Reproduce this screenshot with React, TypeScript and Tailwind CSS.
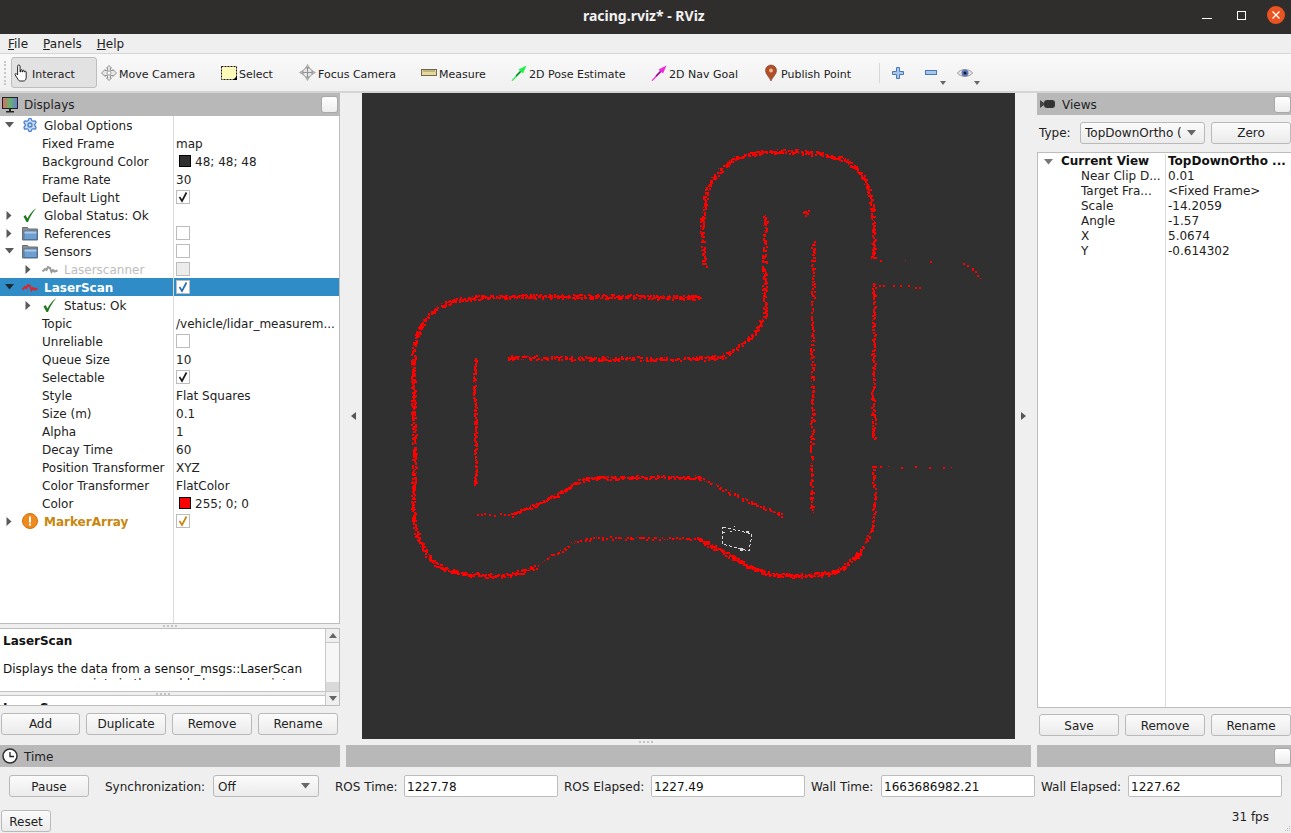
import { Settings } from 'lucide-react';
import type { ReactNode } from 'react';

// ---- laser scan points, screen coordinates ----
type Pt = [number, number];
type Wall = { pts: Pt[]; step: number; jitter: number };

const WALLS: Wall[] = [
  { step: 0.8, jitter: 2, pts: [[704, 265], [702, 240], [702, 220], [706, 193], [714, 177], [729, 162], [744, 155], [775, 151], [806, 152], [840, 158], [859, 172], [869, 193], [873, 223], [873, 258]] },
  { step: 0.9, jitter: 2, pts: [[765, 216], [764, 257], [764, 290], [764, 313], [756, 330], [746, 340], [733, 350], [714, 357], [668, 358], [591, 358], [509, 357]] },
  { step: 0.7, jitter: 2, pts: [[698, 297], [591, 296], [515, 296], [469, 298], [446, 303], [429, 315], [417, 333], [413, 357], [413, 407], [414, 457], [413, 490], [414, 523], [423, 548], [438, 565], [465, 573], [503, 575], [534, 567]] },
  { step: 2.6, jitter: 1.4, pts: [[534, 567], [561, 550], [584, 539], [630, 538], [668, 538], [698, 538]] },
  { step: 0.6, jitter: 2, pts: [[698, 538], [725, 553], [764, 572], [802, 575], [836, 570], [859, 553]] },
  { step: 1.5, jitter: 1.4, pts: [[859, 553], [871, 530], [874, 503], [873, 473], [874, 466]] },
  { step: 1, jitter: 1.4, pts: [[475, 358], [474, 390], [475, 430], [475, 483]] },
  { step: 4, jitter: 0.8, pts: [[478, 514], [511, 514]] },
  { step: 0.8, jitter: 1.6, pts: [[511, 514], [534, 505], [561, 492], [584, 479], [630, 477], [698, 477]] },
  { step: 2, jitter: 1.5, pts: [[698, 477], [725, 490], [752, 503], [781, 515]] },
  { step: 1.4, jitter: 1.8, pts: [[813, 242], [812, 330], [812, 420], [811, 510]] },
  { step: 1.1, jitter: 1.7, pts: [[874, 283], [873, 360], [873, 437]] },
  { step: 0.5, jitter: 2.5, pts: [[804, 212], [808, 213]] },
  { step: 7, jitter: 0.8, pts: [[878, 285], [900, 285], [920, 287]] },
  { step: 22, jitter: 0.6, pts: [[880, 260], [930, 260]] },
  { step: 5, jitter: 0.8, pts: [[964, 263], [972, 268], [980, 278]] },
  { step: 11, jitter: 0.6, pts: [[880, 466], [951, 467]] },
];

let seed = 4211;
const rnd = () => {
  seed = (seed * 1103515245 + 12345) & 0x7fffffff;
  return seed / 0x7fffffff;
};

const catmull = (a: Pt, b: Pt, c: Pt, d: Pt, t: number): Pt => {
  const f = (p0: number, p1: number, p2: number, p3: number) =>
    0.5 * (2 * p1 + (p2 - p0) * t + (2 * p0 - 5 * p1 + 4 * p2 - p3) * t * t + (3 * p1 - p0 - 3 * p2 + p3) * t * t * t);
  return [f(a[0], b[0], c[0], d[0]), f(a[1], b[1], c[1], d[1])];
};

const buildScan = () => {
  let out = '';
  for (const w of WALLS) {
    const p = w.pts;
    for (let i = 0; i < p.length - 1; i++) {
      const a = p[Math.max(i - 1, 0)];
      const b = p[i];
      const c = p[i + 1];
      const d = p[Math.min(i + 2, p.length - 1)];
      const len = Math.hypot(c[0] - b[0], c[1] - b[1]);
      const n = Math.max(1, Math.round(len / w.step));
      for (let k = 0; k <= n; k++) {
        const [x, y] = catmull(a, b, c, d, k / n);
        const px = Math.round(x + (rnd() - 0.5) * 2 * w.jitter);
        const py = Math.round(y + (rnd() - 0.5) * 2 * w.jitter);
        const s = rnd() > 0.8 ? 1 : 2;
        out += `M${px} ${py}h${s}v${s}h-${s}z`;
      }
    }
  }
  return out;
};

const SCAN_PATH = buildScan();

// ---- small drawings ----
const TriDown = ({ color = '#5a5a5a' }: { color?: string }) => (
  <svg width="9" height="6" viewBox="0 0 9 6"><path d="M0 0h9L4.500 5.500z" fill={color} /></svg>
);
const TriRight = ({ color = '#5a5a5a' }: { color?: string }) => (
  <svg width="6" height="9" viewBox="0 0 6 9"><path d="M0.500 0v9L5.500 4.500z" fill={color} /></svg>
);
const TriSmall = () => (
  <svg width="6" height="4" viewBox="0 0 6 4"><path d="M0 0h6L3 4z" fill="#666" /></svg>
);

const CheckMark = ({ color = '#1d1d1d' }: { color?: string }) => (
  <svg width="12" height="12" viewBox="0 0 12 12">
    <path d="M2.500 6l2.500 4L9.500 1.500" fill="none" stroke={color} strokeWidth="1.700" />
  </svg>
);

const Checkbox = ({ checked, color, disabled }: { checked?: boolean; color?: string; disabled?: boolean }) => (
  <span className={`flex h-[14px] w-[14px] items-center justify-center border border-[#bcbcbc] ${disabled ? 'bg-[#ececec]' : 'bg-white'}`}>
    {checked && <CheckMark color={color} />}
  </span>
);

const GreenCheck = () => (
  <svg width="16" height="16" viewBox="0 0 16 16">
    <path d="M1.500 9.500l2-1.500 2 3.500C7.500 7.500 10 4 14.500 1 11 5 8 9.500 6 15h-1.500z" fill="#1f7a1f" />
  </svg>
);

const FolderIcon = () => (
  <svg width="16" height="16" viewBox="0 0 16 16">
    <path d="M.5 2.500h5l1 1.500h9v11H.5z" fill="#8d8d8d" stroke="#6d6d6d" />
    <rect x="2" y="6" width="13" height="8.500" fill="#6f9fd0" stroke="#3f6d9e" strokeWidth="0.800" />
    <rect x="2.500" y="6.500" width="12" height="2" fill="#a9c9ea" />
  </svg>
);

const WaveIcon = ({ color }: { color: string }) => (
  <svg width="16" height="10" viewBox="0 0 16 10">
    <path d="M0.500 7.500L3 5l1.500 1 1.500-3 2 1 1.500 4 1.500-2 1.500 1.500 3-1" fill="none" stroke={color} strokeWidth="2" />
  </svg>
);

const WarnIcon = () => (
  <svg width="16" height="16" viewBox="0 0 16 16">
    <circle cx="8" cy="8" r="7.500" fill="#ef8a1d" stroke="#d0700f" />
    <rect x="7" y="3.500" width="2" height="6" fill="#fff" />
    <rect x="7" y="10.500" width="2" height="2" fill="#fff" />
  </svg>
);

const MonitorIcon = () => (
  <svg width="16" height="16" viewBox="0 0 16 16">
    <defs>
      <linearGradient id="mon" x1="0" x2="1" y1="0" y2="0">
        <stop offset="0" stopColor="#e2666a" />
        <stop offset="0.5" stopColor="#62b56a" />
        <stop offset="1" stopColor="#6c78d8" />
      </linearGradient>
    </defs>
    <rect x="0.500" y="0.500" width="15" height="11" fill="url(#mon)" stroke="#222" />
    <rect x="7" y="12" width="2" height="2" fill="#222" />
    <rect x="4" y="14" width="8" height="1.500" fill="#222" />
  </svg>
);

const ClockIcon = () => (
  <svg width="16" height="16" viewBox="0 0 16 16">
    <circle cx="8" cy="8" r="7" fill="#fff" stroke="#2d2d2d" strokeWidth="1.500" />
    <path d="M8 4v4.500h4" fill="none" stroke="#222" strokeWidth="1.300" />
  </svg>
);

const CameraIcon = () => (
  <svg width="16" height="10" viewBox="0 0 16 10">
    <rect x="4" y="1" width="11" height="8" rx="3" fill="#333" />
    <path d="M0 1v8l4-3V4z" fill="#444" />
  </svg>
);

const HandIcon = () => (
  <svg width="16" height="18" viewBox="0 0 16 18">
    <path
      d="M4.800 1c.8 0 1.300.6 1.300 1.400V8h.5V6.600c0-1.200 1.600-1.200 1.600 0V8h.4V7c0-1.100 1.600-1.100 1.600 0v1h.4c0-1 1.600-1 1.600 0v5c0 2.500-1 4-3 4H6.200c-1.200 0-1.500-.5-2.100-1.500L1.200 11c-.5-1 .6-1.800 1.400-1.100l1 1V2.400C3.600 1.600 4.100 1 4.800 1z"
      fill="#fff"
      stroke="#111"
      strokeWidth="0.900"
    />
  </svg>
);

const MoveIcon = () => (
  <svg width="16" height="16" viewBox="0 0 16 16">
    <path d="M8 .5L10.500 3H9.500v2.500H12V4.500L15.500 8 12 11.500v-1H9.500V13h1L8 15.500 5.500 13h1v-2.500H4v1L.5 8 4 4.500v1h2.500V3h-1z" fill="#e6e6e6" stroke="#7b7b7b" strokeWidth="0.800" />
    <circle cx="8" cy="8" r="2" fill="#fff" stroke="#8b8b8b" strokeWidth="0.800" />
  </svg>
);

const SelectIcon = () => (
  <svg width="16" height="14" viewBox="0 0 16 14">
    <rect x="0.500" y="0.500" width="15" height="13" fill="#fdf9b9" stroke="#111" strokeDasharray="2 1" />
    <path d="M12 14l4-4v4z" fill="#000" />
  </svg>
);

const FocusIcon = () => (
  <svg width="17" height="17" viewBox="0 0 18 18">
    <path d="M9 .5l2 3.500H7zM9 17.500l2-3.500H7zM.5 9L4 7v4zM17.500 9L14 7v4z" fill="#bdbdbd" stroke="#8d8d8d" strokeWidth="0.600" />
    <circle cx="9" cy="9" r="5" fill="#e6e6e6" stroke="#8d8d8d" />
    <path d="M9 4v10M4 9h10" stroke="#8d8d8d" />
  </svg>
);

const RulerIcon = () => (
  <svg width="16" height="7" viewBox="0 0 16 7">
    <rect x="0.500" y="0.500" width="15" height="6" fill="#e8d99a" stroke="#6e6a52" />
    <path d="M3 1v2M5 1v2M7 1v2M9 1v2M11 1v2M13 1v2" stroke="#6e6a52" strokeWidth="0.700" />
  </svg>
);

const ArrowIcon = ({ fill, dark }: { fill: string; dark: string }) => (
  <svg width="16" height="16" viewBox="0 0 16 16">
    <path d="M0.500 15.500L9 6 7.500 4.500 15.500 .5 12 8.500 10.500 7 1.500 16z" fill={fill} />
    <path d="M5 11l4.500-4.500" stroke={dark} strokeWidth="1.200" />
  </svg>
);

const PinIcon = () => (
  <svg width="12" height="18" viewBox="0 0 12 16" className="mr-[2px]">
    <path d="M6 16C4.500 12 .5 9.500.5 5.500a5.500 5.500 0 0 1 11 0C11.500 9.500 7.500 12 6 16z" fill="#b0502a" stroke="#7a3a1e" strokeWidth="0.600" />
    <circle cx="6" cy="5.500" r="2" fill="#f0b48e" />
  </svg>
);

const PlusIcon = () => (
  <svg width="12" height="12" viewBox="0 0 12 12">
    <path d="M4.500.5h3v4h4v3h-4v4h-3v-4h-4v-3h4z" fill="#a8c6ea" stroke="#4a78b4" />
  </svg>
);

const MinusIcon = () => (
  <svg width="12" height="5" viewBox="0 0 12 5">
    <rect x="0.500" y="0.500" width="11" height="4" fill="#a8c6ea" stroke="#4a78b4" />
  </svg>
);

const EyeIcon = () => (
  <svg width="16" height="12" viewBox="0 0 16 12">
    <path d="M.5 6C3 1.500 13 1.500 15.500 6 13 10.500 3 10.500.5 6z" fill="#e4e4e4" stroke="#9a9a9a" />
    <circle cx="8" cy="6" r="3.500" fill="#5f76b5" />
    <circle cx="8" cy="6" r="1.500" fill="#111a3a" />
  </svg>
);

// ---- chrome ----
const FloatButton = () => (
  <span className="h-[17px] w-[17px] shrink-0 rounded-[3px] border border-[#a9a9a9] bg-gradient-to-b from-white to-[#ededed]" />
);

const DockTitle = ({ icon, title }: { icon: ReactNode; title: string }) => (
  <div className="flex h-[23px] shrink-0 items-center bg-[#b8b8b8] pl-[2px] pr-[2px] text-[#222]">
    <span className="flex w-[16px] items-center justify-center">{icon}</span>
    <span className="ml-[6px] mt-[2px] flex-1">{title}</span>
    <FloatButton />
  </div>
);

const Button = ({ label, className, labelClass }: { label: string; className: string; labelClass?: string }) => (
  <div className={`flex h-[22px] items-center justify-center rounded-[3px] border border-[#b9b9b9] bg-gradient-to-b from-[#fbfbfb] to-[#ebebeb] pt-[1px] text-[#222] ${className}`}>
    <span className={labelClass}>{label}</span>
  </div>
);

const Combo = ({ label, className, labelClass }: { label: string; className: string; labelClass?: string }) => (
  <div className={`flex h-[22px] items-center rounded-[3px] border border-[#b9b9b9] bg-gradient-to-b from-[#fbfbfb] to-[#ebebeb] pl-[4px] pr-[8px] text-[#222] ${className}`}>
    <span className={`flex-1 overflow-hidden whitespace-nowrap ${labelClass ?? ''}`}>{label}</span>
    <TriDown color="#666" />
  </div>
);

const Field = ({ label, value, labelClass, inputClass }: { label: string; value: string; labelClass: string; inputClass: string }) => (
  <>
    <span className={`mt-[2px] whitespace-nowrap text-[#222] ${labelClass}`}>{label}</span>
    <div className={`flex h-[22px] items-center rounded-[2px] border border-[#bdbdbd] bg-white pl-[2px] pt-[3px] text-[#111] ${inputClass}`}>{value}</div>
  </>
);

type ToolItem = { icon: ReactNode; label: string; className: string };

const TOOLS: ToolItem[] = [
  { icon: <MoveIcon />, label: 'Move Camera', className: 'ml-[4px] w-[120px]' },
  { icon: <SelectIcon />, label: 'Select', className: 'w-[78px]' },
  { icon: <FocusIcon />, label: 'Focus Camera', className: 'w-[122px]' },
  { icon: <RulerIcon />, label: 'Measure', className: 'w-[90px]' },
  { icon: <ArrowIcon fill="#22f04a" dark="#0c7a24" />, label: '2D Pose Estimate', className: 'w-[140px]' },
  { icon: <ArrowIcon fill="#f028d8" dark="#8a1080" />, label: '2D Nav Goal', className: 'w-[114px]' },
  { icon: <PinIcon />, label: 'Publish Point', className: 'w-[114px]' },
];

type Row = {
  label: string;
  arrow?: 'down' | 'right';
  nested?: boolean;
  icon?: ReactNode;
  value?: ReactNode;
  textClass?: string;
  selected?: boolean;
};

const Text = ({ children }: { children: ReactNode }) => <span className="mt-[2px] whitespace-nowrap text-[#222]">{children}</span>;

const Swatch = ({ color, label }: { color: string; label: string }) => (
  <span className="flex items-center pl-[3px] text-[#222]">
    <span className={`h-[12px] w-[12px] border border-black ${color}`} />
    <span className="ml-[4px] mt-[2px]">{label}</span>
  </span>
);

const ROWS: Row[] = [
  { label: 'Global Options', arrow: 'down', icon: <Settings size={16} color="#4a80cc" fill="#c9dcf4" strokeWidth={2} /> },
  { label: 'Fixed Frame', value: <Text>map</Text> },
  { label: 'Background Color', value: <Swatch color="bg-[#303030]" label="48; 48; 48" /> },
  { label: 'Frame Rate', value: <Text>30</Text> },
  { label: 'Default Light', value: <Checkbox checked /> },
  { label: 'Global Status: Ok', arrow: 'right', icon: <GreenCheck /> },
  { label: 'References', arrow: 'right', icon: <FolderIcon />, value: <Checkbox /> },
  { label: 'Sensors', arrow: 'down', icon: <FolderIcon />, value: <Checkbox /> },
  { label: 'Laserscanner', arrow: 'right', nested: true, icon: <WaveIcon color="#9a9a9a" />, value: <Checkbox disabled />, textClass: 'text-[#bdbdbd]' },
  { label: 'LaserScan', arrow: 'down', selected: true, icon: <WaveIcon color="#d8262c" />, value: <Checkbox checked color="#2a6db0" />, textClass: 'font-bold text-white' },
  { label: 'Status: Ok', arrow: 'right', nested: true, icon: <GreenCheck /> },
  { label: 'Topic', value: <Text>/vehicle/lidar_measurem...</Text> },
  { label: 'Unreliable', value: <Checkbox /> },
  { label: 'Queue Size', value: <Text>10</Text> },
  { label: 'Selectable', value: <Checkbox checked /> },
  { label: 'Style', value: <Text>Flat Squares</Text> },
  { label: 'Size (m)', value: <Text>0.1</Text> },
  { label: 'Alpha', value: <Text>1</Text> },
  { label: 'Decay Time', value: <Text>60</Text> },
  { label: 'Position Transformer', value: <Text>XYZ</Text> },
  { label: 'Color Transformer', value: <Text>FlatColor</Text> },
  { label: 'Color', value: <Swatch color="bg-[#ff0000]" label="255; 0; 0" /> },
  { label: 'MarkerArray', arrow: 'right', icon: <WarnIcon />, value: <Checkbox checked color="#c8860d" />, textClass: 'font-bold text-[#c8860d]' },
];

const TreeRow = ({ row }: { row: Row }) => {
  const arrowColor = row.selected ? '#1e2a33' : '#5a5a5a';
  return (
    <div className={`flex h-[18px] items-center ${row.selected ? 'bg-[#308cc6]' : ''}`}>
      <div className={`flex h-full w-[173px] items-center whitespace-nowrap ${row.nested ? 'pl-[19px]' : ''}`}>
        {row.arrow ? (
          <>
            <span className="flex w-[18px] items-center justify-center">
              {row.arrow === 'down' ? <TriDown color={arrowColor} /> : <TriRight color={arrowColor} />}
            </span>
            <span className={`flex w-[16px] items-center justify-center ${row.nested ? 'ml-[5px]' : 'ml-[4px]'}`}>{row.icon}</span>
            <span className={`ml-[6px] mt-[2px] ${row.textClass ?? 'text-[#222]'}`}>{row.label}</span>
          </>
        ) : (
          <span className="mt-[2px] pl-[42px] text-[#222]">{row.label}</span>
        )}
      </div>
      <div className="h-full w-px bg-[#dadada]" />
      <div className="flex h-full flex-1 items-center pl-[2px]">{row.value}</div>
    </div>
  );
};

const VIEW_ROWS: [string, string][] = [
  ['Near Clip D...', '0.01'],
  ['Target Fra...', '<Fixed Frame>'],
  ['Scale', '-14.2059'],
  ['Angle', '-1.57'],
  ['X', '5.0674'],
  ['Y', '-0.614302'],
];

const Grip = () => <span className="block w-[14px] border-t-2 border-dotted border-[#c4c4c4]" />;

const GutterArrow = ({ left }: { left?: boolean }) => (
  <svg width="5" height="8" viewBox="0 0 5 8">
    <path d={left ? 'M5 0v8L0 4z' : 'M0 0v8l5-4z'} fill="#555" />
  </svg>
);

export default function App() {
  return (
    <div className="flex h-[833px] w-[1291px] flex-col overflow-hidden bg-[#efefef] font-['DejaVu_Sans',sans-serif] text-[12px] leading-[15px]">
      {/* title bar */}
      <div className="flex h-[34px] shrink-0 items-center bg-[#302e2d] pb-[4px] text-white">
        <div className="flex-1 pl-[583px] font-['Noto_Sans',sans-serif] text-[14px] font-bold text-[#f2f2f2]">racing.rviz* - RViz</div>
        <div className="flex w-[100px] items-center">
          <span className="ml-[11px] mt-[7px] h-[1px] w-[10px] bg-white" />
          <span className="ml-[25px] h-[9px] w-[9px] border border-white" />
          <span className="ml-[21px] flex h-[18px] w-[18px] items-center justify-center rounded-full bg-[#e95420]">
            <svg width="10" height="10" viewBox="0 0 10 10"><path d="M1.500 1.500l7 7M8.500 1.500l-7 7" stroke="#fff" strokeWidth="1.200" /></svg>
          </span>
        </div>
      </div>

      {/* menu bar */}
      <div className="flex h-[20px] shrink-0 items-center border-b border-[#d6d6d6] pl-[8px] pt-[2px] text-[#222]">
        <span><span className="underline">F</span>ile</span>
        <span className="ml-[15px]"><span className="underline">P</span>anels</span>
        <span className="ml-[15px]"><span className="underline">H</span>elp</span>
      </div>

      {/* tool bar */}
      <div className="flex h-[39px] shrink-0 items-center border-b-2 border-[#d4d4d4] bg-gradient-to-b from-[#f9f9f9] to-[#f0f0f0] text-[11px] text-[#222]">
        <span className="ml-[4px] h-[24px] w-[3px] border-l-2 border-dotted border-[#c8c8c8]" />
        <div className="ml-[4px] flex h-[31px] w-[86px] items-center rounded-[3px] border border-[#bdbdbd] bg-[#e2e2e2] pl-[2px]">
          <HandIcon />
          <span className="ml-[2px] mt-[3px]">Interact</span>
        </div>
        {TOOLS.map((t) => (
          <div key={t.label} className={`flex items-center whitespace-nowrap ${t.className}`}>
            <span className="flex shrink-0 items-center">{t.icon}</span>
            <span className="ml-[2px] mt-[3px]">{t.label}</span>
          </div>
        ))}
        <span className="h-[20px] w-px bg-[#d8d8d8]" />
        <span className="ml-[12px] flex w-[12px] items-center"><PlusIcon /></span>
        <span className="ml-[21px] flex w-[12px] items-center"><MinusIcon /></span>
        <span className="ml-[3px] mt-[21px]"><TriSmall /></span>
        <span className="ml-[11px] flex w-[16px] items-center"><EyeIcon /></span>
        <span className="ml-[1px] mt-[21px]"><TriSmall /></span>
      </div>

      {/* main area */}
      <div className="flex h-[646px] shrink-0">
        {/* displays */}
        <div className="flex w-[340px] shrink-0 flex-col">
          <DockTitle icon={<MonitorIcon />} title="Displays" />
          <div className="h-[508px] shrink-0 border-r border-b border-[#bdbdbd] bg-white">
            {ROWS.map((r) => <TreeRow key={r.label} row={r} />)}
            <div className="ml-[173px] h-[93px] w-px bg-[#dadada]" />
          </div>
          <div className="flex h-[4px] shrink-0 items-center justify-center"><Grip /></div>
          <div className="flex h-[78px] shrink-0 border-y border-r border-[#bdbdbd]">
            <div className="flex min-w-0 flex-1 flex-col">
              <div className="h-[62px] shrink-0 bg-white pl-[3px] pr-[8px] pt-[5px] text-[#111]">
                <div className="h-[46px] overflow-hidden">
                  <div className="font-bold">LaserScan</div>
                  <div className="mt-[13px]">Displays the data from a sensor_msgs::LaserScan message as points in the world, drawn as points, billboards, or cubes.</div>
                </div>
              </div>
              <div className="flex h-[5px] shrink-0 items-center justify-center border-y border-[#c4c4c4]"><Grip /></div>
              <div className="h-[9px] shrink-0 overflow-hidden bg-white pl-[3px] font-bold text-[#111]">
                <div className="mt-[5px]">LaserScan</div>
              </div>
            </div>
            <div className="flex w-[14px] shrink-0 flex-col border-l border-[#c8c8c8]">
              <div className="flex h-[14px] items-center justify-center border-b border-[#c8c8c8]"><svg width="8" height="5" viewBox="0 0 8 5"><path d="M0 5h8L4 0z" fill="#666" /></svg></div>
              <div className="flex-1 bg-[#f6f6f6]" />
              <div className="h-[9px] bg-[#d9d9d9]" />
              <div className="flex h-[14px] items-center justify-center border-t border-[#c8c8c8]"><svg width="8" height="5" viewBox="0 0 8 5"><path d="M0 0h8L4 5z" fill="#666" /></svg></div>
            </div>
          </div>
          <div className="ml-[1px] mt-[7px] flex gap-[6px]">
            <Button label="Add" className="w-[79px]" />
            <Button label="Duplicate" className="w-[80px]" />
            <Button label="Remove" className="w-[80px]" />
            <Button label="Rename" className="w-[80px]" />
          </div>
        </div>

        <div className="flex w-[22px] shrink-0 items-center justify-center pl-[4px]"><GutterArrow left /></div>

        {/* 3d view */}
        <div className="h-[646px] w-[653px] shrink-0 bg-[#303030]">
          <svg width="653" height="646" viewBox="362 93 653 646" shapeRendering="crispEdges">
            <path d={SCAN_PATH} fill="#ff0000" />
            <path d="M723 527L752 534L749 551L722 544Z" fill="none" stroke="#d8d8d8" strokeWidth="1" strokeDasharray="3 2" />
            <path d="M746 531h3v2h-3zM740 548h3v3h-3zM722 532h3v1h-3zM734 526h1v1h-1zM730 531h2v1h-2z" fill="#d8d8d8" />
          </svg>
        </div>

        <div className="flex w-[22px] shrink-0 items-center justify-center pr-[6px]"><GutterArrow /></div>

        {/* views */}
        <div className="flex w-[254px] shrink-0 flex-col">
          <div className="flex h-[22px] shrink-0 items-center bg-[#b8b8b8] pl-[3px] text-[#222]">
            <CameraIcon />
            <span className="ml-[6px] mt-[2px] flex-1">Views</span>
            <FloatButton />
          </div>
          <div className="mt-[7px] flex items-center pl-[2px]">
            <span className="w-[41px] text-[#222]">Type:</span>
            <Combo label="TopDownOrtho (" className="w-[125px]" />
            <Button label="Zero" className="ml-[6px] w-[80px]" />
          </div>
          <div className="mt-[8px] flex h-[556px] shrink-0 flex-col border border-r-0 border-[#bdbdbd] bg-white pt-px">
            <div className="flex h-[15px] items-center">
              <div className="flex h-full w-[127px] items-center">
                <span className="ml-[6px] flex w-[9px]"><TriDown color="#777" /></span>
                <span className="ml-[8px] font-bold text-[#111]">Current View</span>
              </div>
              <div className="h-full w-px bg-[#dadada]" />
              <span className="ml-[2px] whitespace-nowrap font-bold text-[#111]">TopDownOrtho ...</span>
            </div>
            {VIEW_ROWS.map(([k, v]) => (
              <div key={k} className="flex h-[15px] items-center">
                <span className="w-[127px] pl-[43px] text-[#222]">{k}</span>
                <span className="h-full w-px bg-[#dadada]" />
                <span className="ml-[2px] text-[#222]">{v}</span>
              </div>
            ))}
            <div className="ml-[127px] w-px flex-1 bg-[#dadada]" />
          </div>
          <div className="ml-[2px] mt-[6px] flex gap-[6px]">
            <Button label="Save" className="w-[80px]" labelClass="mt-[2px]" />
            <Button label="Remove" className="w-[80px]" labelClass="mt-[2px]" />
            <Button label="Rename" className="w-[80px]" labelClass="mt-[2px]" />
          </div>
        </div>
      </div>

      {/* time panel */}
      <div className="flex h-[6px] shrink-0 items-center justify-center"><Grip /></div>
      <div className="flex h-[22px] shrink-0 gap-[6px]">
        <div className="flex w-[340px] items-center bg-[#b8b8b8] pl-[2px] text-[#222]">
          <ClockIcon />
          <span className="ml-[6px] mt-[2px]">Time</span>
        </div>
        <div className="w-[685px] bg-[#b8b8b8]" />
        <div className="flex w-[254px] items-center justify-end bg-[#b8b8b8]"><FloatButton /></div>
      </div>
      <div className="mt-[8px] flex shrink-0 items-center pl-[9px]">
        <Button label="Pause" className="w-[80px]" labelClass="mt-[2px]" />
        <span className="ml-[16px] mt-[2px] w-[108px] text-[#222]">Synchronization:</span>
        <Combo label="Off" className="w-[106px]" labelClass="mt-[3px]" />
        <Field label="ROS Time:" value="1227.78" labelClass="ml-[16px] w-[69px]" inputClass="w-[154px]" />
        <Field label="ROS Elapsed:" value="1227.49" labelClass="ml-[6px] w-[87px]" inputClass="w-[154px]" />
        <Field label="Wall Time:" value="1663686982.21" labelClass="ml-[6px] w-[70px]" inputClass="w-[154px]" />
        <Field label="Wall Elapsed:" value="1227.62" labelClass="ml-[6px] w-[87px]" inputClass="w-[154px]" />
      </div>
      <div className="mt-[13px] flex flex-1 items-start pl-px">
        <Button label="Reset" className="w-[50px]" labelClass="mt-[2px]" />
        <span className="ml-auto mr-[22px] text-[#222]">31 fps</span>
        <svg width="8" height="8" viewBox="0 0 8 8" className="absolute left-[1283px] top-[825px]">
          <path d="M6 1h1v1H6zM4 3h1v1H4zM6 3h1v1H6zM2 5h1v1H2zM4 5h1v1H4zM6 5h1v1H6z" fill="#bdbdbd" />
        </svg>
      </div>
    </div>
  );
}
